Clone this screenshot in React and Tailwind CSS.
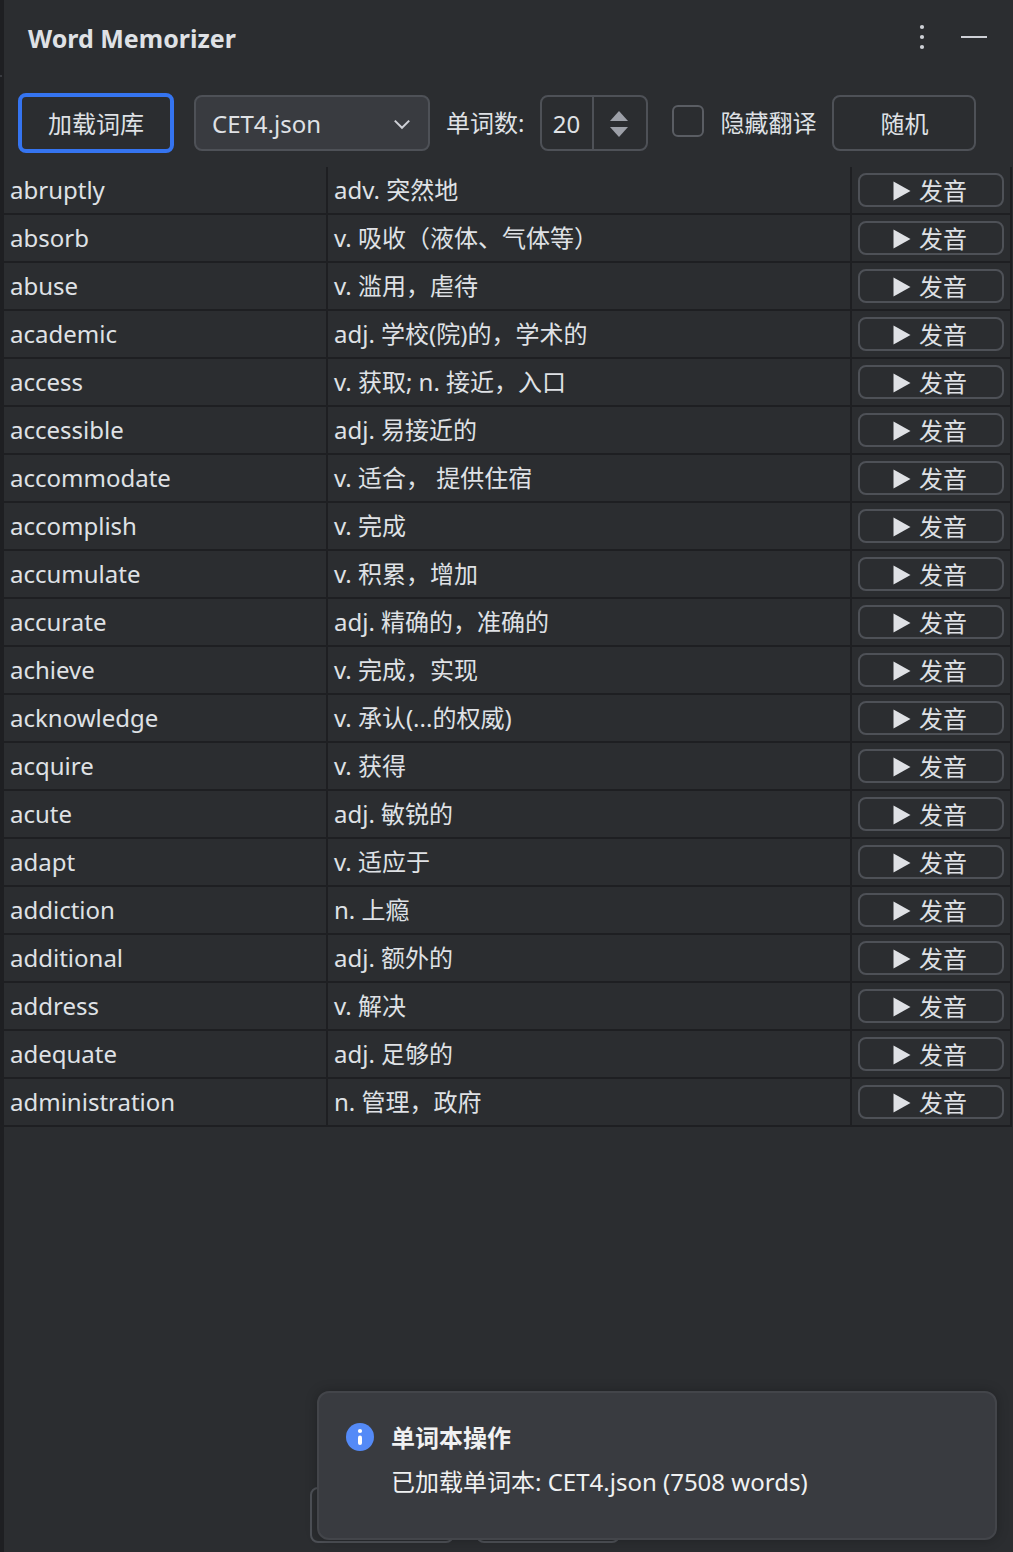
import React, { useState } from "react";

const WORDS = [
  ["abruptly", "adv. 突然地"],
  ["absorb", "v. 吸收（液体、气体等）"],
  ["abuse", "v. 滥用，虐待"],
  ["academic", "adj. 学校(院)的，学术的"],
  ["access", "v. 获取; n. 接近，入口"],
  ["accessible", "adj. 易接近的"],
  ["accommodate", "v. 适合， 提供住宿"],
  ["accomplish", "v. 完成"],
  ["accumulate", "v. 积累，增加"],
  ["accurate", "adj. 精确的，准确的"],
  ["achieve", "v. 完成，实现"],
  ["acknowledge", "v. 承认(...的权威)"],
  ["acquire", "v. 获得"],
  ["acute", "adj. 敏锐的"],
  ["adapt", "v. 适应于"],
  ["addiction", "n. 上瘾"],
  ["additional", "adj. 额外的"],
  ["address", "v. 解决"],
  ["adequate", "adj. 足够的"],
  ["administration", "n. 管理，政府"],
];

function Header() {
  return (
    <header className="flex h-[76px] items-center justify-between pr-[25px] pl-6">
      <h1 className="text-[25px] font-bold">Word Memorizer</h1>
      <div className="flex items-center gap-[11px] pb-0.5">
        <button type="button" aria-label="Options" className="flex size-10 items-center justify-center">
          <svg width="6" height="26" viewBox="0 0 6 26" fill="#ced0d6">
            <circle cx="3" cy="3" r="2.1" />
            <circle cx="3" cy="13" r="2.1" />
            <circle cx="3" cy="23" r="2.1" />
          </svg>
        </button>
        <button type="button" aria-label="Hide" className="flex h-10 items-center pl-2">
          <span className="h-0.5 w-[26px] bg-[#ced0d6]" />
        </button>
      </div>
    </header>
  );
}

function Toolbar({ hidden, setHidden }) {
  const [count, setCount] = useState(20);
  return (
    <div className="flex items-center px-3.5 pt-[17px] pb-3.5">
      <button type="button" className="h-[60px] w-[156px] shrink-0 rounded-lg border-4 border-[#3574f0] pt-0.5">
        加载词库
      </button>
      <div className="relative ml-5 w-[236px] shrink-0">
        <select
          aria-label="词库"
          defaultValue="CET4.json"
          className="h-14 w-full appearance-none rounded-lg border-2 border-[#4e5157] bg-[#393b40] pt-0.5 pr-12 pl-4"
        >
          <option>CET4.json</option>
          <option>CET6.json</option>
        </select>
        <svg
          className="pointer-events-none absolute top-6 right-5"
          width="16"
          height="11"
          viewBox="0 0 16 11"
          fill="none"
          stroke="#ced0d6"
          strokeWidth="2"
        >
          <path d="M0.8 1.6 8 8.8 15.2 1.6" />
        </svg>
      </div>
      <label htmlFor="count" className="ml-4 shrink-0">
        单词数:
      </label>
      <div className="ml-4 flex h-14 w-[108px] shrink-0 rounded-lg border-2 border-[#4e5157]">
        <input
          id="count"
          type="text"
          inputMode="numeric"
          value={count}
          onChange={(e) => setCount(Number(e.target.value) || 0)}
          className="w-[50px] bg-transparent pt-0.5 pr-0.5 text-center outline-none"
        />
        <div className="flex flex-1 flex-col items-center justify-center gap-1.5 border-l-2 border-[#4e5157] pt-0.5 pr-0.5">
          <button type="button" aria-label="增加" onClick={() => setCount(count + 1)}>
            <svg className="block" width="18" height="10" viewBox="0 0 18 10" fill="#9da0a8">
              <path d="M9 0 18 10H0Z" />
            </svg>
          </button>
          <button type="button" aria-label="减少" onClick={() => setCount(Math.max(1, count - 1))}>
            <svg className="block" width="18" height="10" viewBox="0 0 18 10" fill="#9da0a8">
              <path d="M9 10 0 0H18Z" />
            </svg>
          </button>
        </div>
      </div>
      <div className="ml-6 flex shrink-0 items-center">
        <input
          id="hide-translation"
          type="checkbox"
          checked={hidden}
          onChange={(e) => setHidden(e.target.checked)}
          className="mb-1 size-8 appearance-none rounded-md border-2 border-[#5a5d63] checked:bg-[#3574f0]"
        />
        <label htmlFor="hide-translation" className="pl-4">
          隐藏翻译
        </label>
      </div>
      <button type="button" className="ml-4 h-14 w-36 shrink-0 rounded-lg border-2 border-[#4e5157] pt-0.5">
        随机
      </button>
    </div>
  );
}

function WordTable({ hidden }) {
  return (
    <table className="w-full table-fixed border-separate border-spacing-0">
      <colgroup>
        <col className="w-[324px]" />
        <col />
        <col className="w-[160px]" />
      </colgroup>
      <tbody>
        {WORDS.map(([word, meaning]) => (
          <tr key={word} className="h-12">
            <td className="border-r-2 border-b-2 border-[#1e1f22] p-0 pl-1.5">{word}</td>
            <td className="border-r-2 border-b-2 border-[#1e1f22] p-0 pl-1.5">{hidden ? "" : meaning}</td>
            <td className="border-r-2 border-b-2 border-[#1e1f22] px-1.5 py-0">
              <button
                type="button"
                className="flex h-[34px] w-full items-center justify-center gap-2 rounded-lg border-2 border-[#4e5157] pt-0.5 pr-0.5"
              >
                <svg width="18" height="20" viewBox="0 0 18 20" fill="#dfe1e5">
                  <path d="M0.5 0.5 17.5 10 0.5 19.5Z" />
                </svg>
                发音
              </button>
            </td>
          </tr>
        ))}
      </tbody>
    </table>
  );
}

function Toast() {
  return (
    <div
      role="status"
      className="absolute right-4 bottom-3 flex h-[149px] w-[680px] gap-4 rounded-xl border-2 border-[#43454a] bg-[#393b40] pt-7 pl-[26px] text-[#f0f1f2] shadow-[0_0_12px_rgba(0,0,0,0.25)]"
    >
      <svg className="shrink-0" width="30" height="32" viewBox="0 0 30 32">
        <circle cx="15" cy="16" r="14" fill="#548af7" />
        <circle cx="15" cy="10" r="2.1" fill="#fff" />
        <rect x="13" y="14.5" width="4" height="9.5" rx="2" fill="#fff" />
      </svg>
      <div>
        <h2 className="pt-px font-bold">单词本操作</h2>
        <p className="mt-3">已加载单词本: CET4.json (7508 words)</p>
      </div>
    </div>
  );
}

export default function App() {
  const [hidden, setHidden] = useState(false);
  return (
    <div className="flex min-h-screen bg-[#2b2d30] font-['Noto_Sans','Noto_Sans_CJK_SC',sans-serif] text-2xl leading-8 text-[#dfe1e5]">
      <div className="w-1 shrink-0 bg-[#1e1f22] pt-[75px]">
        <div className="h-0.5 w-0.5 bg-[#393b40]" />
      </div>
      <main className="relative flex min-w-0 flex-1 flex-col pr-px">
        <Header />
        <Toolbar hidden={hidden} setHidden={setHidden} />
        <WordTable hidden={hidden} />
        <footer className="mt-auto flex justify-center gap-[22px] pt-8 pr-[86px] pb-[9px]">
          <button type="button" aria-label="上一页" className="h-14 w-36 rounded-lg border-2 border-[#4e5157]" />
          <button type="button" aria-label="下一页" className="h-14 w-36 rounded-lg border-2 border-[#4e5157]" />
        </footer>
        <Toast />
      </main>
    </div>
  );
}
